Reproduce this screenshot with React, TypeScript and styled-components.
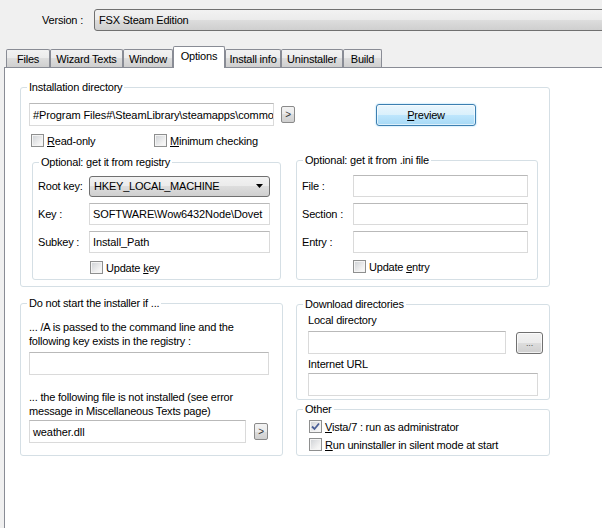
import React from "react";
import styled, { createGlobalStyle } from "styled-components";

const GlobalStyle = createGlobalStyle`
  html, body { margin: 0; padding: 0; background: #f0f0f0; overflow: hidden; }
  body { font-family: "Liberation Sans", Arial, sans-serif; font-size: 11px; color: #000; }
  * { box-sizing: border-box; }
`;

const Window = styled.div`
  width: 602px;
  height: 528px;
  overflow: hidden;
  background: #f0f0f0;
  display: flex;
  flex-direction: column;
  letter-spacing: -0.2px;
`;

const Header = styled.div`
  display: flex;
  align-items: center;
  padding: 9px 0 0 42px;
`;

const HeaderLabel = styled.span`
  width: 52px;
  flex: none;
`;

const winButtonBg = `linear-gradient(#f2f2f2 0%, #ebebeb 50%, #dddddd 50%, #cfcfcf 100%)`;

const Combo = styled.div`
  flex: 1;
  margin-right: -10px;
  height: 22px;
  border: 1px solid #707070;
  border-radius: 3px;
  background: ${winButtonBg};
  display: flex;
  align-items: center;
  padding-left: 4px;
`;

const TabStrip = styled.div`
  display: flex;
  align-items: flex-end;
  height: 21px;
  margin: 15px 0 0 6px;
`;

const Tab = styled.div<{ $w: number; $active?: boolean }>`
  width: ${(p) => p.$w}px;
  height: ${(p) => (p.$active ? 22 : 18)}px;
  margin-bottom: ${(p) => (p.$active ? -1 : 0)}px;
  border: 1px solid #898c95;
  border-bottom: none;
  border-radius: 2px 2px 0 0;
  background: ${(p) =>
    p.$active ? "#ffffff" : "linear-gradient(#f2f2f2 0%, #ebebeb 50%, #dddddd 50%, #cfcfcf 100%)"};
  display: flex;
  align-items: center;
  justify-content: center;
  padding-bottom: ${(p) => (p.$active ? 3 : 0)}px;
  position: relative;
  z-index: ${(p) => (p.$active ? 1 : 0)};
`;

const Panel = styled.div`
  flex: 1;
  margin-left: 4px;
  width: 640px;
  background: #ffffff;
  border-top: 1px solid #898c95;
  border-left: 1px solid #898c95;
  padding: 13px 0 0 15px;
`;

const Group = styled.fieldset<{ $w: number; $mt?: number }>`
  width: ${(p) => p.$w}px;
  margin: ${(p) => p.$mt ?? 0}px 0 0 0;
  padding: 0;
  min-width: 0;
  border: 1px solid #d5dfe5;
  border-radius: 3px;
  flex: none;
`;

const Legend = styled.legend`
  margin-left: 6px;
  padding: 0 2px;
  line-height: 13px;
`;

const GroupBody = styled.div<{ $p: string }>`
  padding: ${(p) => p.$p};
`;

const Row = styled.div<{ $mt?: number; $ml?: number; $gap?: number }>`
  display: flex;
  align-items: center;
  margin-top: ${(p) => p.$mt ?? 0}px;
  margin-left: ${(p) => p.$ml ?? 0}px;
  gap: ${(p) => p.$gap ?? 0}px;
`;

const TextBox = styled.div<{ $w: number; $h?: number }>`
  width: ${(p) => p.$w}px;
  height: ${(p) => p.$h ?? 23}px;
  flex: none;
  border: 1px solid #dadada;
  border-top-color: #b9b9b9;
  background: #fff;
  padding: 0 3px;
  display: flex;
  align-items: center;
  white-space: nowrap;
  overflow: hidden;
  letter-spacing: -0.1px;
`;

const SmallButton = styled.div<{ $ml?: number }>`
  width: 14px;
  height: 17px;
  flex: none;
  margin-left: ${(p) => p.$ml ?? 0}px;
  border: 1px solid #8a8a8a;
  border-radius: 2px;
  background: ${winButtonBg};
  display: flex;
  align-items: center;
  justify-content: center;
  font-size: 10px;
  color: #333;
`;

const PushButton = styled.div<{ $w: number; $h: number; $ml?: number }>`
  width: ${(p) => p.$w}px;
  height: ${(p) => p.$h}px;
  flex: none;
  margin-left: ${(p) => p.$ml ?? 0}px;
  border: 1px solid #707070;
  border-radius: 3px;
  background: ${winButtonBg};
  box-shadow: inset 0 0 0 1px rgba(255, 255, 255, 0.7);
  display: flex;
  align-items: center;
  justify-content: center;
  color: #555;
  font-size: 9px;
`;

const PreviewButton = styled.div`
  width: 100px;
  height: 22px;
  flex: none;
  margin-left: 81px;
  border: 1px solid #3c7fb1;
  border-radius: 3px;
  background: linear-gradient(#eaf6fd 0%, #d9f0fc 50%, #bee6fd 50%, #a7d9f5 100%);
  box-shadow: inset 0 0 0 1px rgba(255, 255, 255, 0.6), 0 0 2px #8fd0f5;
  display: flex;
  align-items: center;
  justify-content: center;
`;

const U = styled.span`
  text-decoration: underline;
`;

const CheckItem = styled.div<{ $w?: number }>`
  display: flex;
  align-items: center;
  gap: 3px;
  height: 13px;
  width: ${(p) => (p.$w ? `${p.$w}px` : "auto")};
  flex: none;
`;

const Box = styled.div`
  width: 13px;
  height: 13px;
  flex: none;
  border: 1px solid #8e8f8f;
  background: linear-gradient(135deg, #cdd0d4 0%, #f2f2f2 70%, #fbfbfb 100%);
  box-shadow: inset 0 0 0 1px #f4f4f4;
  display: flex;
  align-items: center;
  justify-content: center;
`;

const Check: React.FC<{ checked?: boolean; w?: number; children: React.ReactNode }> = ({
  checked,
  w,
  children,
}) => (
  <CheckItem $w={w}>
    <Box>
      {checked && (
        <svg width="9" height="9" viewBox="0 0 9 9">
          <path d="M1 4.5 L3.5 7 L8 1.5" fill="none" stroke="#4a5f97" strokeWidth="1.8" />
        </svg>
      )}
    </Box>
    <span>{children}</span>
  </CheckItem>
);

const SubGroups = styled.div`
  display: flex;
  align-items: stretch;
  margin: 7px 0 0 11px;
  gap: 15px;
`;

const FieldGrid = styled.div<{ $cols: string }>`
  display: grid;
  grid-template-columns: ${(p) => p.$cols};
  grid-auto-rows: 22px;
  row-gap: 6px;
  align-items: center;
`;

const SelectBox = styled.div`
  height: 21px;
  border: 1px solid #707070;
  border-radius: 3px;
  background: ${winButtonBg};
  display: flex;
  align-items: center;
  justify-content: space-between;
  padding: 0 6px 0 4px;
`;

const GridCheck = styled.div<{ $mt: number; $ml: number }>`
  margin: ${(p) => p.$mt}px 0 0 ${(p) => p.$ml}px;
`;

const Bottom = styled.div`
  display: flex;
  align-items: flex-start;
  gap: 13px;
  margin-top: 10px;
`;

const RightCol = styled.div`
  display: flex;
  flex-direction: column;
  gap: 3px;
`;

const Para = styled.div<{ $mt?: number }>`
  line-height: 14px;
  margin-top: ${(p) => p.$mt ?? 0}px;
`;

const Caption = styled.div<{ $mt?: number }>`
  line-height: 13px;
  margin-top: ${(p) => p.$mt ?? 0}px;
`;

const Spaced = styled.div<{ $mt: number }>`
  margin-top: ${(p) => p.$mt}px;
`;

const tabs: { label: string; w: number }[] = [
  { label: "Files", w: 44 },
  { label: "Wizard Texts", w: 73 },
  { label: "Window", w: 50 },
  { label: "Options", w: 52 },
  { label: "Install info", w: 56 },
  { label: "Uninstaller", w: 62 },
  { label: "Build", w: 39 },
];

export default function App() {
  return (
    <Window>
      <GlobalStyle />
      <Header>
        <HeaderLabel>Version :</HeaderLabel>
        <Combo>FSX Steam Edition</Combo>
      </Header>
      <TabStrip>
        {tabs.map((t) => (
          <Tab key={t.label} $w={t.w} $active={t.label === "Options"}>
            {t.label}
          </Tab>
        ))}
      </TabStrip>
      <Panel>
        <Group $w={530}>
          <Legend>Installation directory</Legend>
          <GroupBody $p="9px 0 6px 0">
            <Row $ml={8}>
              <TextBox $w={245}>#Program Files#\SteamLibrary\steamapps\commo</TextBox>
              <SmallButton $ml={7}>&gt;</SmallButton>
              <PreviewButton>
                <span>
                  <U>P</U>review
                </span>
              </PreviewButton>
            </Row>
            <Row $mt={8} $ml={10}>
              <Check w={123}>
                <U>R</U>ead-only
              </Check>
              <Check>
                <U>M</U>inimum checking
              </Check>
            </Row>
            <SubGroups>
              <Group $w={249} $mt={2}>
                <Legend>Optional: get it from registry</Legend>
                <GroupBody $p="6px 0 5px 5px">
                  <FieldGrid $cols="51px 181px">
                    <span>Root key:</span>
                    <SelectBox>
                      <span>HKEY_LOCAL_MACHINE</span>
                      <svg width="7" height="4" viewBox="0 0 7 4">
                        <path d="M0 0 H7 L3.5 4 Z" fill="#000" />
                      </svg>
                    </SelectBox>
                    <span>Key :</span>
                    <TextBox $w={181} $h={22}>SOFTWARE\Wow6432Node\Dovet</TextBox>
                    <span>Subkey :</span>
                    <TextBox $w={181} $h={22}>Install_Path</TextBox>
                  </FieldGrid>
                  <GridCheck $mt={8} $ml={52}>
                    <Check>
                      Update <U>k</U>ey
                    </Check>
                  </GridCheck>
                </GroupBody>
              </Group>
              <Group $w={242}>
                <Legend>Optional: get it from .ini file</Legend>
                <GroupBody $p="8px 0 6px 5px">
                  <FieldGrid $cols="51px 175px">
                    <span>File :</span>
                    <TextBox $w={175} $h={22} />
                    <span>Section :</span>
                    <TextBox $w={175} $h={22} />
                    <span>Entry :</span>
                    <TextBox $w={175} $h={22} />
                  </FieldGrid>
                  <GridCheck $mt={7} $ml={51}>
                    <Check>
                      Update <U>e</U>ntry
                    </Check>
                  </GridCheck>
                </GroupBody>
              </Group>
            </SubGroups>
          </GroupBody>
        </Group>
        <Bottom>
          <Group $w={263}>
            <Legend>Do not start the installer if ...</Legend>
            <GroupBody $p="10px 0 12px 8px">
              <Para>
                ... /A is passed to the command line and the
                <br />
                following key exists in the registry :
              </Para>
              <Spaced $mt={4}>
                <TextBox $w={240} />
              </Spaced>
              <Para $mt={15}>
                ... the following file is not installed (see error
                <br />
                message in Miscellaneous Texts page)
              </Para>
              <Row $mt={2}>
                <TextBox $w={217}>weather.dll</TextBox>
                <SmallButton $ml={8}>&gt;</SmallButton>
              </Row>
            </GroupBody>
          </Group>
          <RightCol>
            <Group $w={254} $mt={1}>
              <Legend>Download directories</Legend>
              <GroupBody $p="3px 0 3px 11px">
                <Caption>Local directory</Caption>
                <Row $mt={4}>
                  <TextBox $w={198} />
                  <PushButton $w={27} $h={22} $ml={10}>
                    ...
                  </PushButton>
                </Row>
                <Caption $mt={4}>Internet URL</Caption>
                <Spaced $mt={2}>
                  <TextBox $w={230} />
                </Spaced>
              </GroupBody>
            </Group>
            <Group $w={254}>
              <Legend>Other</Legend>
              <GroupBody $p="4px 0 4px 12px">
                <Check checked>
                  <U>V</U>ista/7 : run as administrator
                </Check>
                <Spaced $mt={5}>
                  <Check>
                    <U>R</U>un uninstaller in silent mode at start
                  </Check>
                </Spaced>
              </GroupBody>
            </Group>
          </RightCol>
        </Bottom>
      </Panel>
    </Window>
  );
}
